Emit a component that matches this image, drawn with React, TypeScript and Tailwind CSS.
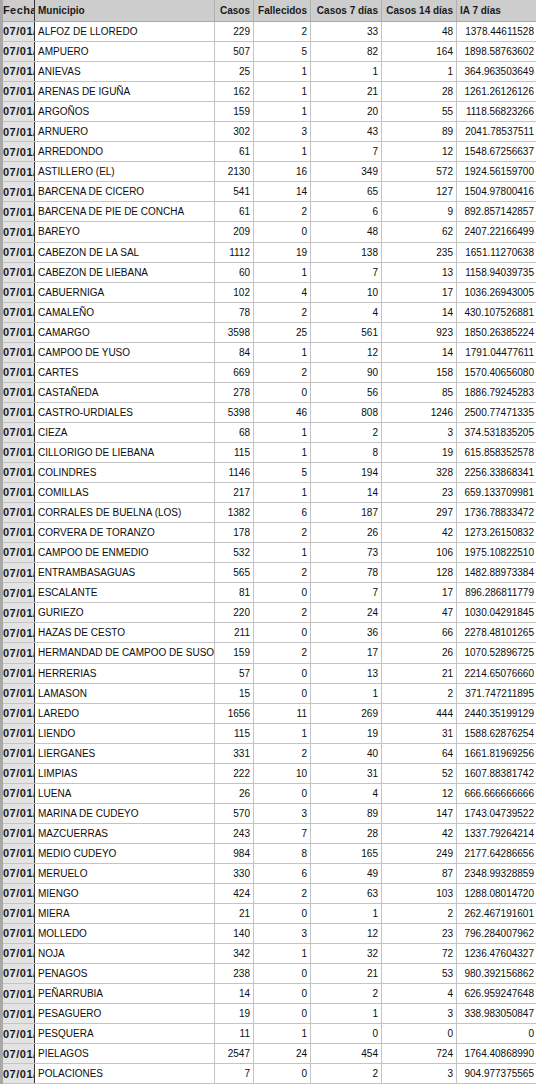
import React from "react";

const data: [string, number, number, number, number, string][] = [
  ["ALFOZ DE LLOREDO", 229, 2, 33, 48, "1378.44611528"],
  ["AMPUERO", 507, 5, 82, 164, "1898.58763602"],
  ["ANIEVAS", 25, 1, 1, 1, "364.963503649"],
  ["ARENAS DE IGUÑA", 162, 1, 21, 28, "1261.26126126"],
  ["ARGOÑOS", 159, 1, 20, 55, "1118.56823266"],
  ["ARNUERO", 302, 3, 43, 89, "2041.78537511"],
  ["ARREDONDO", 61, 1, 7, 12, "1548.67256637"],
  ["ASTILLERO (EL)", 2130, 16, 349, 572, "1924.56159700"],
  ["BARCENA DE CICERO", 541, 14, 65, 127, "1504.97800416"],
  ["BARCENA DE PIE DE CONCHA", 61, 2, 6, 9, "892.857142857"],
  ["BAREYO", 209, 0, 48, 62, "2407.22166499"],
  ["CABEZON DE LA SAL", 1112, 19, 138, 235, "1651.11270638"],
  ["CABEZON DE LIEBANA", 60, 1, 7, 13, "1158.94039735"],
  ["CABUERNIGA", 102, 4, 10, 17, "1036.26943005"],
  ["CAMALEÑO", 78, 2, 4, 14, "430.107526881"],
  ["CAMARGO", 3598, 25, 561, 923, "1850.26385224"],
  ["CAMPOO DE YUSO", 84, 1, 12, 14, "1791.04477611"],
  ["CARTES", 669, 2, 90, 158, "1570.40656080"],
  ["CASTAÑEDA", 278, 0, 56, 85, "1886.79245283"],
  ["CASTRO-URDIALES", 5398, 46, 808, 1246, "2500.77471335"],
  ["CIEZA", 68, 1, 2, 3, "374.531835205"],
  ["CILLORIGO DE LIEBANA", 115, 1, 8, 19, "615.858352578"],
  ["COLINDRES", 1146, 5, 194, 328, "2256.33868341"],
  ["COMILLAS", 217, 1, 14, 23, "659.133709981"],
  ["CORRALES DE BUELNA (LOS)", 1382, 6, 187, 297, "1736.78833472"],
  ["CORVERA DE TORANZO", 178, 2, 26, 42, "1273.26150832"],
  ["CAMPOO DE ENMEDIO", 532, 1, 73, 106, "1975.10822510"],
  ["ENTRAMBASAGUAS", 565, 2, 78, 128, "1482.88973384"],
  ["ESCALANTE", 81, 0, 7, 17, "896.286811779"],
  ["GURIEZO", 220, 2, 24, 47, "1030.04291845"],
  ["HAZAS DE CESTO", 211, 0, 36, 66, "2278.48101265"],
  ["HERMANDAD DE CAMPOO DE SUSO", 159, 2, 17, 26, "1070.52896725"],
  ["HERRERIAS", 57, 0, 13, 21, "2214.65076660"],
  ["LAMASON", 15, 0, 1, 2, "371.747211895"],
  ["LAREDO", 1656, 11, 269, 444, "2440.35199129"],
  ["LIENDO", 115, 1, 19, 31, "1588.62876254"],
  ["LIERGANES", 331, 2, 40, 64, "1661.81969256"],
  ["LIMPIAS", 222, 10, 31, 52, "1607.88381742"],
  ["LUENA", 26, 0, 4, 12, "666.666666666"],
  ["MARINA DE CUDEYO", 570, 3, 89, 147, "1743.04739522"],
  ["MAZCUERRAS", 243, 7, 28, 42, "1337.79264214"],
  ["MEDIO CUDEYO", 984, 8, 165, 249, "2177.64286656"],
  ["MERUELO", 330, 6, 49, 87, "2348.99328859"],
  ["MIENGO", 424, 2, 63, 103, "1288.08014720"],
  ["MIERA", 21, 0, 1, 2, "262.467191601"],
  ["MOLLEDO", 140, 3, 12, 23, "796.284007962"],
  ["NOJA", 342, 1, 32, 72, "1236.47604327"],
  ["PENAGOS", 238, 0, 21, 53, "980.392156862"],
  ["PEÑARRUBIA", 14, 0, 2, 4, "626.959247648"],
  ["PESAGUERO", 19, 0, 1, 3, "338.983050847"],
  ["PESQUERA", 11, 1, 0, 0, "0"],
  ["PIELAGOS", 2547, 24, 454, 724, "1764.40868990"],
  ["POLACIONES", 7, 0, 2, 3, "904.977375565"],
];

const cell = "h-full flex items-center border-r border-[#c4c4c4] overflow-hidden whitespace-nowrap";

export default function App() {
  return (
    <div
      className="w-[536px] bg-white text-[10px] text-[#0d0d0d] border-l-[3px] border-[#a8a8a8]"
      style={{ fontFamily: '"Liberation Sans", Arial, Helvetica, sans-serif' }}
    >
      <div className="flex h-[22px] bg-[#cdcdcd] border-b border-[#a9a9a9] font-bold text-[#1a1a1a]">
        <div className="w-[32px] h-full flex items-center border-r border-[#333] overflow-hidden whitespace-nowrap text-[11px] tracking-[0.4px]">Fecha</div>
        <div className="w-[180px] h-full flex items-center px-[3px] border-r border-[#b0b0b0]">Municipio</div>
        <div className="w-[39px] h-full flex items-center justify-end px-[3px] border-r border-[#b0b0b0]">Casos</div>
        <div className="w-[57px] h-full flex items-center justify-end px-[3px] border-r border-[#b0b0b0]">Fallecidos</div>
        <div className="w-[71px] h-full flex items-center justify-end px-[3px] border-r border-[#b0b0b0]">Casos 7 días</div>
        <div className="w-[75px] h-full flex items-center justify-end px-[3px] border-r border-[#b0b0b0]">Casos 14 días</div>
        <div className="flex-1 h-full flex items-center px-[3px]">IA 7 días</div>
      </div>
      {data.map(([name, casos, fall, c7, c14, ia]) => (
        <div key={name} className="flex h-[20.06px] border-b border-[#c4c4c4]">
          <div className="w-[32px] h-full flex items-center bg-[#e3e3e3] border-r border-[#333] overflow-hidden whitespace-nowrap font-bold text-[11px] tracking-[0.5px] text-[#1a1a1a]">07/01/2021</div>
          <div className={`w-[180px] px-[3px] ${cell}`}>{name}</div>
          <div className={`w-[39px] justify-end px-[3px] ${cell}`}>{casos}</div>
          <div className={`w-[57px] justify-end px-[3px] ${cell}`}>{fall}</div>
          <div className={`w-[71px] justify-end px-[3px] ${cell}`}>{c7}</div>
          <div className={`w-[75px] justify-end px-[3px] ${cell}`}>{c14}</div>
          <div className="flex-1 h-full flex items-center justify-end pr-[2px] overflow-hidden whitespace-nowrap">{ia}</div>
        </div>
      ))}
    </div>
  );
}
